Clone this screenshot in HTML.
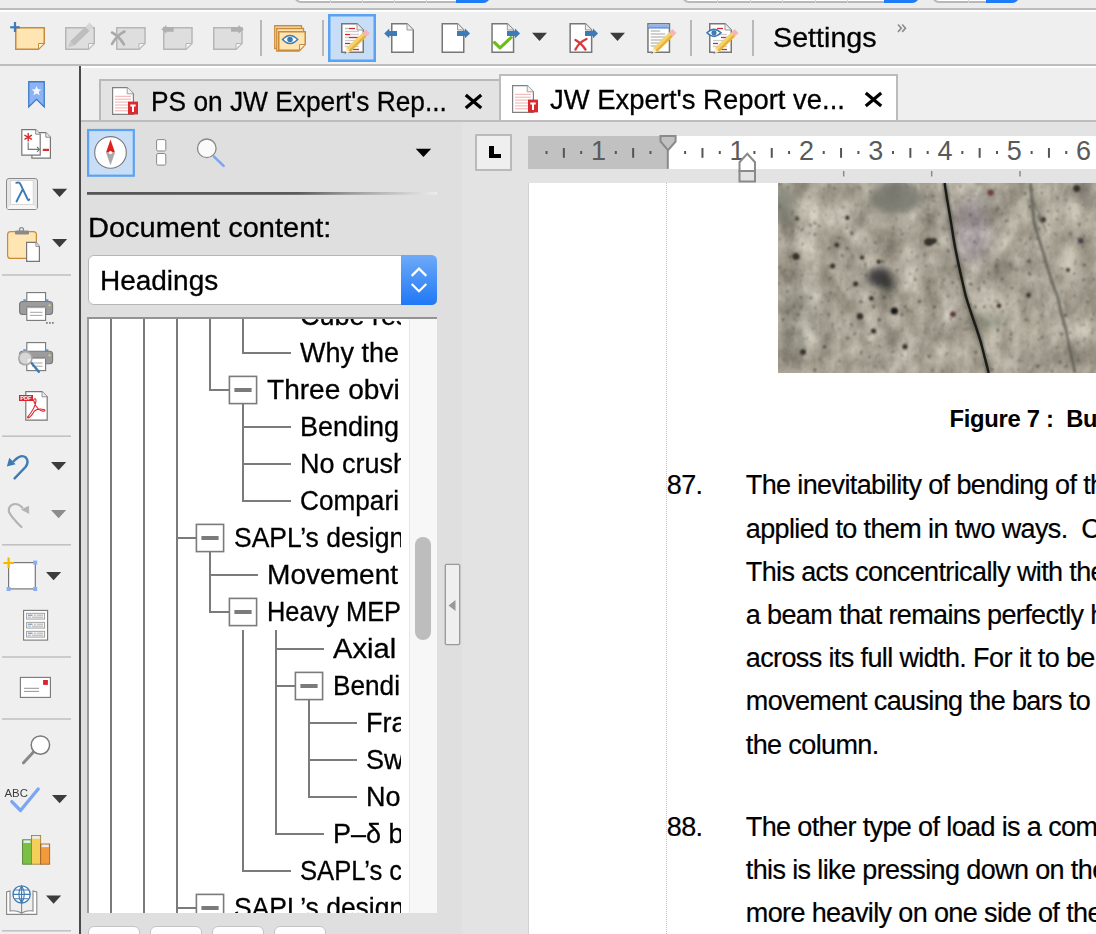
<!DOCTYPE html>
<html><head><meta charset="utf-8">
<style>
*{margin:0;padding:0;box-sizing:border-box}
html,body{width:1096px;height:934px;overflow:hidden;background:#ececec;font-family:"Liberation Sans",sans-serif;color:#000}
.a{position:absolute}
.t{position:absolute;white-space:pre;line-height:1}
svg{position:absolute;overflow:visible}
</style></head><body>

<!-- top strip -->
<div class="a" style="left:0;top:0;width:1096px;height:8px;background:#ececec"></div>
<div class="a" style="left:294px;top:-20px;width:196px;height:23px;border:2px solid #b8b8b8;border-radius:7px;background:#fff"></div>
<div class="a" style="left:456px;top:-20px;width:34px;height:23px;background:#1f7cf8;border-radius:0 7px 7px 0"></div>
<div class="a" style="left:682px;top:-20px;width:237px;height:23px;border:2px solid #b8b8b8;border-radius:7px;background:#fff"></div>
<div class="a" style="left:884px;top:-20px;width:35px;height:23px;background:#1f7cf8;border-radius:0 7px 7px 0"></div>
<div class="a" style="left:932px;top:-20px;width:87px;height:23px;border:2px solid #b8b8b8;border-radius:7px;background:#fff"></div>
<div class="a" style="left:986px;top:-20px;width:33px;height:23px;background:#1f7cf8;border-radius:0 7px 7px 0"></div>
<div class="a" style="left:330px;top:0;width:1px;height:3px;background:#d4d4d4"></div><div class="a" style="left:362px;top:0;width:1px;height:3px;background:#d4d4d4"></div><div class="a" style="left:394px;top:0;width:1px;height:3px;background:#d4d4d4"></div><div class="a" style="left:426px;top:0;width:1px;height:3px;background:#d4d4d4"></div><div class="a" style="left:717px;top:0;width:1px;height:3px;background:#d4d4d4"></div><div class="a" style="left:750px;top:0;width:1px;height:3px;background:#d4d4d4"></div><div class="a" style="left:782px;top:0;width:1px;height:3px;background:#d4d4d4"></div><div class="a" style="left:815px;top:0;width:1px;height:3px;background:#d4d4d4"></div><div class="a" style="left:847px;top:0;width:1px;height:3px;background:#d4d4d4"></div><div class="a" style="left:968px;top:0;width:1px;height:3px;background:#d4d4d4"></div>
<div class="a" style="left:0;top:8px;width:1096px;height:2px;background:#bcbcbc"></div>
<div class="a" style="left:0;top:10px;width:1096px;height:2px;background:#fdfdfd"></div>

<!-- toolbar -->
<div id="toolbar" class="a" style="left:0;top:12px;width:1096px;height:52px;background:#efefef"></div>
<div class="a" style="left:0;top:64px;width:1096px;height:2px;background:#bdbdbd"></div>

<!-- left sidebar -->
<div id="sidebar" class="a" style="left:0;top:66px;width:79px;height:868px;background:#efefef"></div>
<div class="a" style="left:79px;top:66px;width:2px;height:868px;background:#4a4a4a"></div>

<!-- tab bar -->
<div class="a" style="left:81px;top:66px;width:1015px;height:55px;background:#efefef"></div>
<div class="a" style="left:81px;top:66px;width:1015px;height:2px;background:#fdfdfd"></div>

<!-- panel -->
<div id="panel" class="a" style="left:81px;top:121px;width:381px;height:813px;background:#dfdfdf"></div>
<!-- doc area -->
<div id="docarea" class="a" style="left:462px;top:121px;width:634px;height:813px;background:#e3e3e3"></div>
<div class="a" style="left:81px;top:120px;width:1015px;height:2px;background:#bdbdbd"></div>

<!-- page -->
<div id="page" class="a" style="left:528px;top:183px;width:568px;height:751px;background:#fff;border-left:1px solid #d2d2d2"></div>

<!--IMG-->
<svg class="a" style="left:778px;top:183px;overflow:hidden" width="318" height="190" viewBox="778 183 318 190">
<defs>
<filter id="tex" x="0" y="0" width="100%" height="100%" color-interpolation-filters="sRGB">
 <feTurbulence type="fractalNoise" baseFrequency="0.05 0.035" numOctaves="4" seed="11" result="n"/>
 <feColorMatrix in="n" type="matrix" values="0.5 0.5 0 0 0  0.5 0.5 0 0 0  0.5 0.5 0 0 0  0 0 0 0 1" result="g"/>
 <feComposite in="SourceGraphic" in2="g" operator="arithmetic" k1="0" k2="1" k3="0.6" k4="-0.3" result="base"/>
 <feTurbulence type="fractalNoise" baseFrequency="0.22" numOctaves="2" seed="3" result="n2"/>
 <feColorMatrix in="n2" type="matrix" values="0 0 0 0 0.2  0 0 0 0 0.2  0 0 0 0 0.18  -10 0 0 0 3.1" result="sp"/>
 <feGaussianBlur in="sp" stdDeviation="0.8" result="sp1"/><feComponentTransfer in="sp1" result="sp2"><feFuncA type="linear" slope="0.7"/></feComponentTransfer>
 <feComposite in="sp2" in2="base" operator="over" result="o"/><feGaussianBlur in="o" stdDeviation="0.5"/>
</filter>
<filter id="bl05"><feGaussianBlur stdDeviation="0.5"/></filter><filter id="bl1"><feGaussianBlur stdDeviation="1.3"/></filter>
<filter id="bl3"><feGaussianBlur stdDeviation="3.5"/></filter>
<filter id="bl6"><feGaussianBlur stdDeviation="7"/></filter>
</defs>
<g filter="url(#tex)">
<rect x="778" y="183" width="318" height="190" fill="#a7a294"/>
<g filter="url(#bl6)" opacity="0.6">
 <ellipse cx="820" cy="230" rx="25" ry="30" fill="#bab4a5"/>
 <ellipse cx="1010" cy="330" rx="30" ry="35" fill="#b9b3a3"/>
 <ellipse cx="795" cy="320" rx="14" ry="40" fill="#8e8b80"/>
 <ellipse cx="972" cy="230" rx="18" ry="35" fill="#9f94a0"/>
 <ellipse cx="1065" cy="240" rx="25" ry="40" fill="#b4af9f"/>
 <ellipse cx="860" cy="360" rx="35" ry="12" fill="#bcb6a8"/>
 <ellipse cx="920" cy="300" rx="20" ry="25" fill="#b7b2a3"/>
 <ellipse cx="1040" cy="360" rx="30" ry="10" fill="#a09c90"/>
</g>
</g>
<g filter="url(#bl3)">
 <ellipse cx="895.5" cy="198" rx="26" ry="17" fill="#77776f" opacity="0.85"/>
 <ellipse cx="784" cy="205" rx="9" ry="20" fill="#7a7e72" opacity="0.7"/>
 <ellipse cx="879" cy="277" rx="12" ry="10" fill="#343234" opacity="0.9"/>
 <ellipse cx="888" cy="285" rx="7" ry="7" fill="#2a2828" opacity="0.7"/>
 <ellipse cx="988" cy="322" rx="15" ry="6" fill="#78806e" opacity="0.6"/>
 <ellipse cx="1082" cy="195" rx="10" ry="8" fill="#7a7470" opacity="0.5"/>
</g>
<g filter="url(#bl1)" fill="#35332c">
 <circle cx="796" cy="256.5" r="3.6"/><ellipse cx="929" cy="242" rx="5" ry="4"/><circle cx="894.4" cy="311" r="3.6" fill="#181818"/>
 <circle cx="860" cy="316.3" r="3.2"/><circle cx="832.6" cy="266" r="2.6"/><circle cx="855.7" cy="283.8" r="2.6"/>
 <circle cx="871.4" cy="298.4" r="2.3"/><circle cx="836.8" cy="245" r="2.3"/><circle cx="862" cy="257.6" r="2.2"/>
 <circle cx="803" cy="352" r="3"/><circle cx="905" cy="346.7" r="2.6"/><circle cx="873.5" cy="331" r="2.6"/>
 <circle cx="878.7" cy="261.8" r="2.2"/><circle cx="847.3" cy="217.7" r="2.2"/><circle cx="797" cy="218.8" r="1.8"/>
 <circle cx="934" cy="240.8" r="2.8"/><circle cx="953" cy="314.2" r="2.8" fill="#5a3838"/><circle cx="999" cy="305.8" r="2.3"/>
 <circle cx="1028.4" cy="295.3" r="2.2"/><circle cx="1080.8" cy="240.8" r="2.8" fill="#4a3c48"/><circle cx="1068" cy="270" r="1.9"/>
 <circle cx="1043" cy="219.8" r="2.8"/><circle cx="990.7" cy="192.6" r="3.2" fill="#6a4040"/><circle cx="1076.7" cy="188.4" r="3.5"/>
</g>
<path d="M1030.5,183 L1032,200 L1034,222 L1038,236 L1043,252 L1046.3,263.9 L1052,282 L1057.8,297.4 L1061,312 L1066.2,331 L1070,350 L1075,373" fill="none" stroke="#5a5850" stroke-width="2.4" opacity="0.85" filter="url(#bl1)"/><path d="M1032,200 L1040,215 L1046,232" fill="none" stroke="#6a6860" stroke-width="1.6" opacity="0.7" filter="url(#bl1)"/>
<path d="M944.6,183 C947,200 950,215 953,235 S961,275 964.5,291 S978,330 982.3,347.7 S987,365 988.6,373" fill="none" stroke="#50504a" stroke-width="5" opacity="0.6" filter="url(#bl1)"/>
<path d="M944.6,183 C947,200 950,215 953,235 S961,275 964.5,291 S978,330 982.3,347.7 S987,365 988.6,373" fill="none" stroke="#1a1a14" stroke-width="2.4" filter="url(#bl05)"/>
</svg>

<!--/IMG-->
<!--DOC-->
<div class="a" style="left:475px;top:134px;width:37px;height:37px;background:#efefef;border:2px solid #bababa"></div>
<div class="a" style="left:489px;top:146px;width:4.5px;height:12.3px;background:#000"></div>
<div class="a" style="left:489px;top:153.7px;width:12px;height:4.6px;background:#000"></div>
<div class="a" style="left:528px;top:135.5px;width:140px;height:33.3px;background:#c1c1c1"></div>
<div class="a" style="left:668px;top:135.5px;width:428px;height:33.3px;background:#fff"></div>
<div class="t" style="left:591.00px;top:137.84px;font-size:27px;width:15px;text-align:center;color:#5a5a5a">1</div>
<div class="t" style="left:729.60px;top:137.84px;font-size:27px;width:15px;text-align:center;color:#5a5a5a">1</div>
<div class="t" style="left:798.90px;top:137.84px;font-size:27px;width:15px;text-align:center;color:#5a5a5a">2</div>
<div class="t" style="left:868.20px;top:137.84px;font-size:27px;width:15px;text-align:center;color:#5a5a5a">3</div>
<div class="t" style="left:937.50px;top:137.84px;font-size:27px;width:15px;text-align:center;color:#5a5a5a">4</div>
<div class="t" style="left:1006.80px;top:137.84px;font-size:27px;width:15px;text-align:center;color:#5a5a5a">5</div>
<div class="t" style="left:1076.10px;top:137.84px;font-size:27px;width:15px;text-align:center;color:#5a5a5a">6</div>
<div class="t" style="left:666.8px;top:472.34px;font-size:27px;letter-spacing:-0.62px;font-weight:normal;color:#000;-webkit-text-stroke:0.2px #000">87.</div>
<div class="t" style="left:745.8px;top:472.34px;font-size:27px;letter-spacing:-0.62px;font-weight:normal;color:#000;-webkit-text-stroke:0.2px #000">The inevitability of bending of the columns</div>
<div class="t" style="left:745.8px;top:515.54px;font-size:27px;letter-spacing:-0.62px;font-weight:normal;color:#000;-webkit-text-stroke:0.2px #000">applied to them in two ways.  Concentric</div>
<div class="t" style="left:745.8px;top:558.74px;font-size:27px;letter-spacing:-0.62px;font-weight:normal;color:#000;-webkit-text-stroke:0.2px #000">This acts concentrically with the column</div>
<div class="t" style="left:745.8px;top:601.94px;font-size:27px;letter-spacing:-0.62px;font-weight:normal;color:#000;-webkit-text-stroke:0.2px #000">a beam that remains perfectly horizontal</div>
<div class="t" style="left:745.8px;top:645.14px;font-size:27px;letter-spacing:-0.62px;font-weight:normal;color:#000;-webkit-text-stroke:0.2px #000">across its full width. For it to bend</div>
<div class="t" style="left:745.8px;top:688.34px;font-size:27px;letter-spacing:-0.62px;font-weight:normal;color:#000;-webkit-text-stroke:0.2px #000">movement causing the bars to</div>
<div class="t" style="left:745.8px;top:731.54px;font-size:27px;letter-spacing:-0.62px;font-weight:normal;color:#000;-webkit-text-stroke:0.2px #000">the column.</div>
<div class="t" style="left:666.8px;top:813.74px;font-size:27px;letter-spacing:-0.62px;font-weight:normal;color:#000;-webkit-text-stroke:0.2px #000">88.</div>
<div class="t" style="left:745.8px;top:813.74px;font-size:27px;letter-spacing:-0.62px;font-weight:normal;color:#000;-webkit-text-stroke:0.2px #000">The other type of load is a combination</div>
<div class="t" style="left:745.8px;top:856.94px;font-size:27px;letter-spacing:-0.62px;font-weight:normal;color:#000;-webkit-text-stroke:0.2px #000">this is like pressing down on the top</div>
<div class="t" style="left:745.8px;top:900.14px;font-size:27px;letter-spacing:-0.62px;font-weight:normal;color:#000;-webkit-text-stroke:0.2px #000">more heavily on one side of the column</div>
<div class="t" style="left:949.5px;top:406.6px;font-size:23.8px;letter-spacing:-0.3px;font-weight:bold;color:#000">Figure 7 :  Buckling</div>
<svg class="a" style="left:0;top:0" width="1096" height="934" viewBox="0 0 1096 934"><rect x="545.52" y="151" width="2" height="3" fill="#555"/><rect x="580.17" y="151" width="2" height="3" fill="#555"/><rect x="562.85" y="148" width="2" height="9.8" fill="#555"/><rect x="614.83" y="151" width="2" height="3" fill="#555"/><rect x="649.48" y="151" width="2" height="3" fill="#555"/><rect x="632.15" y="148" width="2" height="9.8" fill="#555"/><rect x="684.12" y="151" width="2" height="3" fill="#555"/><rect x="718.77" y="151" width="2" height="3" fill="#555"/><rect x="701.45" y="148" width="2" height="9.8" fill="#555"/><rect x="753.42" y="151" width="2" height="3" fill="#555"/><rect x="788.07" y="151" width="2" height="3" fill="#555"/><rect x="770.75" y="148" width="2" height="9.8" fill="#555"/><rect x="822.73" y="151" width="2" height="3" fill="#555"/><rect x="857.38" y="151" width="2" height="3" fill="#555"/><rect x="840.05" y="148" width="2" height="9.8" fill="#555"/><rect x="892.02" y="151" width="2" height="3" fill="#555"/><rect x="926.67" y="151" width="2" height="3" fill="#555"/><rect x="909.35" y="148" width="2" height="9.8" fill="#555"/><rect x="961.33" y="151" width="2" height="3" fill="#555"/><rect x="995.98" y="151" width="2" height="3" fill="#555"/><rect x="978.65" y="148" width="2" height="9.8" fill="#555"/><rect x="1030.62" y="151" width="2" height="3" fill="#555"/><rect x="1065.27" y="151" width="2" height="3" fill="#555"/><rect x="1047.95" y="148" width="2" height="9.8" fill="#555"/><rect x="842.95" y="171" width="1.5" height="5.5" fill="#8a8a8a"/><rect x="930.95" y="171" width="1.5" height="5.5" fill="#8a8a8a"/><rect x="1019.25" y="171" width="1.5" height="5.5" fill="#8a8a8a"/><rect x="666.8" y="150" width="2" height="18.8" fill="#8a8a8a"/><path d="M660.5,135.9 H675.6 V141.5 L668,150.2 L660.5,141.5 Z" fill="#c1c1c1" stroke="#8a8a8a" stroke-width="2"/><path d="M739.5,181.4 V170.9 H755 V181.4 Z" fill="#e3e3e3" stroke="#8a8a8a" stroke-width="2"/><path d="M739.5,170.9 V162.2 L747.3,153.8 L755,162.2 V170.9 Z" fill="#fff" stroke="#8a8a8a" stroke-width="2"/><path d="M666.5,183 V934" stroke="#c4c4c4" stroke-width="1" stroke-dasharray="1,1"/></svg>
<!--/DOC-->
<!--PANEL-->
<div class="a" style="left:99px;top:79px;width:401px;height:43px;background:#e3e3e3;border-left:2px solid #b9b9b9;border-top:2px solid #b9b9b9"></div>
<div class="a" style="left:499px;top:74px;width:399px;height:47px;background:#fff;border:2px solid #bcbcbc;border-bottom:none"></div>
<div class="a" style="left:81px;top:120px;width:1015px;height:2px;background:#bdbdbd"></div>
<svg class="a" style="left:112px;top:87px" width="28" height="30" viewBox="0 0 28 30">
<path d="M0.6,0.6 H15.2 L21.4,6.8 V27.4 H0.6 Z" fill="#fff" stroke="#808080" stroke-width="1.2"/>
<path d="M15.2,0.6 V6.8 H21.4" fill="#f2f2f2" stroke="#9a9a9a" stroke-width="0.9"/>
<g stroke="#f2a5a5" stroke-width="0.9"><path d="M3,9.3 H19"/><path d="M3,12.2 H19"/><path d="M3,15.1 H19"/><path d="M3,18 H16"/><path d="M3,20.9 H16"/><path d="M3,23.8 H16"/></g>
<rect x="16" y="14.6" width="10" height="12.8" fill="#da2a2f"/>
<path d="M18.3,17.6 H23.7 V19.6 H22 V25 H20 V19.6 H18.3 Z" fill="#fff"/>
</svg>
<svg class="a" style="left:512px;top:85px" width="28" height="30" viewBox="0 0 28 30">
<path d="M0.6,0.6 H15.2 L21.4,6.8 V27.4 H0.6 Z" fill="#fff" stroke="#808080" stroke-width="1.2"/>
<path d="M15.2,0.6 V6.8 H21.4" fill="#f2f2f2" stroke="#9a9a9a" stroke-width="0.9"/>
<g stroke="#f2a5a5" stroke-width="0.9"><path d="M3,9.3 H19"/><path d="M3,12.2 H19"/><path d="M3,15.1 H19"/><path d="M3,18 H16"/><path d="M3,20.9 H16"/><path d="M3,23.8 H16"/></g>
<rect x="16" y="14.6" width="10" height="12.8" fill="#da2a2f"/>
<path d="M18.3,17.6 H23.7 V19.6 H22 V25 H20 V19.6 H18.3 Z" fill="#fff"/>
</svg>
<div class="t" style="left:151.4px;top:89px;font-size:27px;font-weight:normal;color:#000;transform:scaleX(0.974);transform-origin:0 0;;-webkit-text-stroke:0.3px #000">PS on JW Expert's Rep...</div>
<div class="t" style="left:550px;top:87px;font-size:27px;font-weight:normal;color:#000;transform:scaleX(1.016);transform-origin:0 0;;-webkit-text-stroke:0.3px #000">JW Expert's Report ve...</div>
<svg class="a" style="left:465px;top:93.5px" width="17" height="15" viewBox="0 0 17 15"><path d="M2,2 L15,13 M15,2 L2,13" stroke="#000" stroke-width="3.2" stroke-linecap="square"/></svg>
<svg class="a" style="left:864.5px;top:92px" width="17" height="15" viewBox="0 0 17 15"><path d="M2,2 L15,13 M15,2 L2,13" stroke="#000" stroke-width="3.2" stroke-linecap="square"/></svg>
<svg class="a" style="left:0;top:0" width="1096" height="934" viewBox="0 0 1096 934">
<rect x="88.1" y="130" width="45.7" height="45.7" fill="#c8def6" stroke="#5aa2f3" stroke-width="2.2"/>
<circle cx="110.5" cy="152.4" r="15.8" fill="#fff" stroke="#7a7a7a" stroke-width="1.1"/>
<path d="M110.5,139.4 L115,152.4 H106 Z" fill="#e02020"/>
<path d="M110.5,165.2 L115,152.4 H106 Z" fill="#a8a8a8"/>
<circle cx="110.5" cy="152.6" r="1.7" fill="#fff"/>
<rect x="156.6" y="139.6" width="9.2" height="11.4" rx="1.5" fill="#fff" stroke="#888" stroke-width="1"/>
<rect x="156.6" y="153.5" width="9.2" height="11.6" rx="1.5" fill="#fff" stroke="#888" stroke-width="1"/>
<path d="M214,156.6 L223.6,165.9" stroke="#7ba6f1" stroke-width="2.6" stroke-linecap="round"/>
<circle cx="206.8" cy="148.3" r="9.3" fill="#fafafa" stroke="#888" stroke-width="1.3"/>
<path d="M415.7,148.7 H431.2 L423.45,157.1 Z" fill="#000"/>
<defs><linearGradient id="gl" x1="0" x2="1"><stop offset="0" stop-color="#565656"/><stop offset="0.6" stop-color="#5a5a5a"/><stop offset="0.75" stop-color="#9a9a9a"/><stop offset="1" stop-color="#ececec"/></linearGradient>
<linearGradient id="cb" x1="0" x2="0" y1="0" y2="1"><stop offset="0" stop-color="#6eaaf8"/><stop offset="1" stop-color="#1f78f6"/></linearGradient></defs>
<rect x="87" y="192" width="350" height="2.8" fill="url(#gl)"/>
</svg>
<div class="t" style="left:88.2px;top:215.1px;font-size:27px;font-weight:normal;color:#000;transform:scaleX(1.074);transform-origin:0 0;;-webkit-text-stroke:0.3px #000">Document content:</div>
<div class="a" style="left:88px;top:255px;width:349px;height:50px;background:#fff;border:1.3px solid #b6b6b6;border-radius:6px"></div>
<svg class="a" style="left:401px;top:255px" width="36" height="50" viewBox="0 0 36 50">
<path d="M0,0 H30 Q36,0 36,6 V44 Q36,50 30,50 H0 Z" fill="url(#cb)"/>
<path d="M10.7,20.9 L18,13.6 L25.3,20.9 M10.7,29 L18,36.2 L25.3,29" fill="none" stroke="#fff" stroke-width="2.2"/>
</svg>
<div class="t" style="left:100px;top:268.1px;font-size:27px;font-weight:normal;color:#000;transform:scaleX(1.036);transform-origin:0 0;;-webkit-text-stroke:0.3px #000">Headings</div>
<div class="a" style="left:87px;top:317px;width:350px;height:596px;background:#fff;border-left:2px solid #9a9a9a;border-top:2px solid #939393"></div>
<div class="a" style="left:409px;top:319px;width:28px;height:594px;background:#f7f7f7;border-left:1px solid #e6e6e6"></div>
<div class="a" style="left:415px;top:537px;width:16px;height:103px;background:#bdbdbd;border-radius:8px"></div>
<svg class="a" style="left:0;top:0" width="1096" height="934" viewBox="0 0 1096 934"><defs><clipPath id="tc"><rect x="89" y="319" width="320" height="594"/></clipPath></defs><g clip-path="url(#tc)"><rect x="110" y="319" width="2" height="595" fill="#7b7b7b"/><rect x="143" y="319" width="2" height="595" fill="#7b7b7b"/><rect x="176" y="319" width="2" height="595" fill="#7b7b7b"/><rect x="209" y="319" width="2" height="72" fill="#7b7b7b"/><rect x="209" y="552" width="2" height="61" fill="#7b7b7b"/><rect x="242" y="319" width="2" height="35" fill="#7b7b7b"/><rect x="242" y="404" width="2" height="98" fill="#7b7b7b"/><rect x="242" y="630" width="2" height="242" fill="#7b7b7b"/><rect x="275" y="630" width="2" height="205" fill="#7b7b7b"/><rect x="308" y="700" width="2" height="98" fill="#7b7b7b"/><rect x="244" y="315" width="47" height="2" fill="#7b7b7b"/><rect x="244" y="352" width="47" height="2" fill="#7b7b7b"/><rect x="211" y="389" width="19" height="2" fill="#7b7b7b"/><rect x="229.4" y="376.4" width="27.2" height="27.2" fill="#fff" stroke="#7b7b7b" stroke-width="1.6"/><rect x="234.4" y="388" width="17.2" height="4" fill="#7b7b7b"/><rect x="244" y="426" width="47" height="2" fill="#7b7b7b"/><rect x="244" y="463" width="47" height="2" fill="#7b7b7b"/><rect x="244" y="500" width="47" height="2" fill="#7b7b7b"/><rect x="178" y="537" width="19" height="2" fill="#7b7b7b"/><rect x="196.4" y="524.4" width="27.2" height="27.2" fill="#fff" stroke="#7b7b7b" stroke-width="1.6"/><rect x="201.4" y="536" width="17.2" height="4" fill="#7b7b7b"/><rect x="211" y="574" width="47" height="2" fill="#7b7b7b"/><rect x="211" y="611" width="19" height="2" fill="#7b7b7b"/><rect x="229.4" y="598.4" width="27.2" height="27.2" fill="#fff" stroke="#7b7b7b" stroke-width="1.6"/><rect x="234.4" y="610" width="17.2" height="4" fill="#7b7b7b"/><rect x="277" y="648" width="47" height="2" fill="#7b7b7b"/><rect x="277" y="685" width="19" height="2" fill="#7b7b7b"/><rect x="295.4" y="672.4" width="27.2" height="27.2" fill="#fff" stroke="#7b7b7b" stroke-width="1.6"/><rect x="300.4" y="684" width="17.2" height="4" fill="#7b7b7b"/><rect x="310" y="722" width="47" height="2" fill="#7b7b7b"/><rect x="310" y="759" width="47" height="2" fill="#7b7b7b"/><rect x="310" y="796" width="47" height="2" fill="#7b7b7b"/><rect x="277" y="833" width="47" height="2" fill="#7b7b7b"/><rect x="244" y="870" width="47" height="2" fill="#7b7b7b"/><rect x="178" y="907" width="19" height="2" fill="#7b7b7b"/><rect x="196.4" y="894.4" width="27.2" height="27.2" fill="#fff" stroke="#7b7b7b" stroke-width="1.6"/><rect x="201.4" y="906" width="17.2" height="4" fill="#7b7b7b"/></g></svg>
<div class="a" style="left:89px;top:319px;width:312px;height:594px;overflow:hidden">
<div class="t" style="left:211.0px;top:-16.36px;font-size:27px;transform:scaleX(1.0);transform-origin:0 0;-webkit-text-stroke:0.3px #000">Cube results</div>
<div class="t" style="left:211.0px;top:20.64px;font-size:27px;transform:scaleX(1.0);transform-origin:0 0;-webkit-text-stroke:0.3px #000">Why the column</div>
<div class="t" style="left:178.0px;top:57.64px;font-size:27px;transform:scaleX(1.04);transform-origin:0 0;-webkit-text-stroke:0.3px #000">Three obvi</div>
<div class="t" style="left:211.0px;top:94.64px;font-size:27px;transform:scaleX(1.0);transform-origin:0 0;-webkit-text-stroke:0.3px #000">Bending</div>
<div class="t" style="left:211.0px;top:131.64px;font-size:27px;transform:scaleX(1.0);transform-origin:0 0;-webkit-text-stroke:0.3px #000">No crushing</div>
<div class="t" style="left:211.0px;top:168.64px;font-size:27px;transform:scaleX(0.97);transform-origin:0 0;-webkit-text-stroke:0.3px #000">Compari</div>
<div class="t" style="left:145.0px;top:205.64px;font-size:27px;transform:scaleX(0.98);transform-origin:0 0;-webkit-text-stroke:0.3px #000">SAPL’s design</div>
<div class="t" style="left:178.0px;top:242.64px;font-size:27px;transform:scaleX(1.04);transform-origin:0 0;-webkit-text-stroke:0.3px #000">Movement</div>
<div class="t" style="left:178.0px;top:279.64px;font-size:27px;transform:scaleX(0.94);transform-origin:0 0;-webkit-text-stroke:0.3px #000">Heavy MEP</div>
<div class="t" style="left:244.0px;top:316.64px;font-size:27px;transform:scaleX(1.08);transform-origin:0 0;-webkit-text-stroke:0.3px #000">Axial load</div>
<div class="t" style="left:244.0px;top:353.64px;font-size:27px;transform:scaleX(0.97);transform-origin:0 0;-webkit-text-stroke:0.3px #000">Bending</div>
<div class="t" style="left:277.0px;top:390.64px;font-size:27px;transform:scaleX(1.0);transform-origin:0 0;-webkit-text-stroke:0.3px #000">Frame</div>
<div class="t" style="left:277.0px;top:427.64px;font-size:27px;transform:scaleX(1.0);transform-origin:0 0;-webkit-text-stroke:0.3px #000">Sway</div>
<div class="t" style="left:277.0px;top:464.64px;font-size:27px;transform:scaleX(1.0);transform-origin:0 0;-webkit-text-stroke:0.3px #000">No sway</div>
<div class="t" style="left:244.0px;top:501.64px;font-size:27px;transform:scaleX(1.0);transform-origin:0 0;-webkit-text-stroke:0.3px #000">P–δ bending</div>
<div class="t" style="left:211.0px;top:538.64px;font-size:27px;transform:scaleX(0.95);transform-origin:0 0;-webkit-text-stroke:0.3px #000">SAPL’s calc</div>
<div class="t" style="left:145.0px;top:575.64px;font-size:27px;transform:scaleX(0.98);transform-origin:0 0;-webkit-text-stroke:0.3px #000">SAPL’s design</div>
</div>
<div class="a" style="left:88px;top:926px;width:52px;height:20px;background:#fdfdfd;border:1.2px solid #c4c4c4;border-radius:6px"></div>
<div class="a" style="left:150px;top:926px;width:52px;height:20px;background:#fdfdfd;border:1.2px solid #c4c4c4;border-radius:6px"></div>
<div class="a" style="left:212px;top:926px;width:52px;height:20px;background:#fdfdfd;border:1.2px solid #c4c4c4;border-radius:6px"></div>
<div class="a" style="left:274px;top:926px;width:52px;height:20px;background:#fdfdfd;border:1.2px solid #c4c4c4;border-radius:6px"></div>
<svg class="a" style="left:444px;top:563px" width="18" height="84" viewBox="0 0 18 84">
<path d="M2.3,1.3 H14.7 L15.7,2.3 V80.7 L14.7,81.7 H2.3 L1.3,80.7 V2.3 Z" fill="#efefef" stroke="#999" stroke-width="1.3"/>
<path d="M4.5,42.5 L11.5,37 V48 Z" fill="#999"/>
</svg>
<!--/PANEL-->
<!--TOPICONS-->
<svg class="a" style="left:0;top:0" width="1096" height="934" viewBox="0 0 1096 934">
<defs>
 <g id="pencil">
  <path d="M0,0 L5.5,-2.8 L5.5,2.8 Z" fill="#f7ead0"/>
  <path d="M0,0 L2,-1 L2,1 Z" fill="#555"/>
  <rect x="5.5" y="-2.8" width="22" height="5.6" fill="#f6d368"/>
  <rect x="5.5" y="0.4" width="22" height="2.4" fill="#e6b23a"/>
  <rect x="27.5" y="-2.8" width="5" height="5.6" fill="#f5b5b5"/>
 </g>
 <g id="docw">
  <path d="M0.75,0.75 H16 L22.25,7 V29.25 H0.75 Z" fill="#fff" stroke="#777" stroke-width="1.5"/>
  <path d="M16,0.75 V7 H22.25" fill="#eee" stroke="#999" stroke-width="1"/>
 </g>
 <path id="dd" d="M0,0 H15 L7.5,8.3 Z" fill="#3c3c3c"/>
</defs>

<!-- toolbar icons -->
<!-- new comment -->
<path d="M15.75,27.75 H44.25 V43.5 L38.5,49.25 H15.75 Z" fill="#fee5b2" stroke="#c98a3c" stroke-width="1.5"/>
<path d="M38.5,49.25 V43.5 H44.25 Z" fill="#fff5dc" stroke="#c98a3c" stroke-width="1"/>
<rect x="10.2" y="26.2" width="9.6" height="2.2" fill="#3e7bb6"/>
<rect x="13.9" y="22" width="2.2" height="10" fill="#3e7bb6"/>
<!-- edit comment gray -->
<path d="M65.75,27.75 H94.25 V43.5 L88.5,49.25 H65.75 Z" fill="#dedede" stroke="#b6b6b6" stroke-width="1.5"/>
<path d="M88.5,49.25 V43.5 H94.25 Z" fill="#f4f4f4" stroke="#b6b6b6" stroke-width="1"/>
<g transform="translate(68,47.6) rotate(-44)"><path d="M0,0 L6,-3 L6,3 Z" fill="#c8c8c8"/><rect x="6" y="-3" width="21" height="6" fill="#bdbdbd"/><rect x="27" y="-3" width="6" height="6" fill="#d6d6d6"/></g>
<!-- delete comment -->
<path d="M116.75,27.75 H145 V43.5 L139,49.25 H116.75 Z" fill="#dedede" stroke="#b6b6b6" stroke-width="1.5"/>
<path d="M139,49.25 V43.5 H145 Z" fill="#f4f4f4" stroke="#b6b6b6" stroke-width="1"/>
<path d="M112,44 Q117,35 124.5,31.5 M112,32.5 Q119,36 124,44.5" fill="none" stroke="#aaa" stroke-width="2.6" stroke-linecap="round"/>
<!-- prev comment -->
<path d="M163.75,27.75 H192 V43.5 L186,49.25 H163.75 Z" fill="#dedede" stroke="#b6b6b6" stroke-width="1.5"/>
<path d="M186,49.25 V43.5 H192 Z" fill="#f4f4f4" stroke="#b6b6b6" stroke-width="1"/>
<path d="M161.3,29.3 L166.4,24.9 V27 H173.7 V31.7 H166.4 V33.8 Z" fill="#b0b0b0"/>
<!-- next comment -->
<path d="M213.75,27.75 H242 V43.5 L236,49.25 H213.75 Z" fill="#dedede" stroke="#b6b6b6" stroke-width="1.5"/>
<path d="M236,49.25 V43.5 H242 Z" fill="#f4f4f4" stroke="#b6b6b6" stroke-width="1"/>
<path d="M243.8,29.3 L238.4,24.9 V27 H231 V31.7 H238.4 V33.8 Z" fill="#b0b0b0"/>
<!-- sep -->
<rect x="260" y="20" width="2" height="36" fill="#b8b8b8"/>
<!-- show comments -->
<path d="M274.75,25.75 H301.5 V44 L297,48.5 H274.75 Z" fill="#fee5b2" stroke="#c98a3c" stroke-width="1.3"/>
<path d="M276.75,28.5 H303.5 V46.5 L299,51 H276.75 Z" fill="#fee5b2" stroke="#c98a3c" stroke-width="1.3"/>
<path d="M278.75,31.75 H305.25 V44.5 L299.5,50.25 H278.75 Z" fill="#fee5b2" stroke="#c98a3c" stroke-width="1.5"/>
<path d="M299.5,50.25 V44.5 H305.25 Z" fill="#fff5dc" stroke="#c98a3c" stroke-width="1"/>
<path d="M282.6,39.5 Q290,31.5 297.6,39.5 Q290,47.5 282.6,39.5 Z" fill="#fff" stroke="#3e7bb6" stroke-width="1.6"/>
<circle cx="290" cy="39.5" r="2.8" fill="#3e7bb6"/>
<rect x="322" y="20" width="2" height="36" fill="#b8b8b8"/>
<!-- selected record -->
<rect x="329.25" y="15.25" width="45.5" height="45.5" fill="#c8def6" stroke="#5aa2f3" stroke-width="2.5"/>
<g transform="translate(341,23)">
 <path d="M0.75,0.75 H16 L22.25,7 V29.25 H0.75 Z" fill="#fff" stroke="#777" stroke-width="1.5"/>
 <path d="M16,0.75 V7 H22.25" fill="#eee" stroke="#999" stroke-width="1"/>
 <g stroke-width="1.3"><path d="M4,5.5 H8" stroke="#bbb"/><path d="M8,5.5 H14" stroke="#d42a2a"/>
 <path d="M4,8.5 H18" stroke="#ccc"/><path d="M4,11.5 H9" stroke="#d42a2a"/><path d="M9,11.5 H18" stroke="#ccc"/>
 <path d="M4,14.5 H8" stroke="#ccc"/><path d="M8,14.5 H18" stroke="#d42a2a"/><path d="M4,17.5 H18" stroke="#ccc"/>
 <path d="M4,20.5 H9" stroke="#d42a2a"/><path d="M9,20.5 H18" stroke="#ccc"/><path d="M4,23.5 H18" stroke="#ccc"/><path d="M12,26.5 H18" stroke="#d42a2a"/></g>
</g>
<use href="#pencil" transform="translate(344.5,53.7) rotate(-43.7)"/>
<!-- prev change -->
<use href="#docw" transform="translate(391,23)"/>
<path d="M384.2,33.4 L389.3,28.6 V31 H397 V35.9 H389.3 V38.2 Z" fill="#3e7bb6"/>
<!-- next change -->
<use href="#docw" transform="translate(441.5,23)"/>
<path d="M470.1,33.4 L465,28.6 V31 H457 V35.9 H465 V38.2 Z" fill="#3e7bb6"/>
<!-- accept -->
<use href="#docw" transform="translate(491.3,23)"/>
<path d="M520.1,33.4 L515,28.6 V31 H507 V35.9 H515 V38.2 Z" fill="#3e7bb6"/>
<path d="M494.5,42.5 L500,47.8 L511,37.6" fill="none" stroke="#6cbe1a" stroke-width="3.2" stroke-linecap="round" stroke-linejoin="round"/>
<use href="#dd" transform="translate(532,32.7)"/>
<!-- reject -->
<use href="#docw" transform="translate(569.4,23)"/>
<path d="M598.1,33.4 L593,28.6 V31 H585 V35.9 H593 V38.2 Z" fill="#3e7bb6"/>
<path d="M575.5,49.5 Q579,42 586.5,39 M575.5,40 Q581,43 585.5,49.5" fill="none" stroke="#d73a3a" stroke-width="2.4" stroke-linecap="round"/>
<use href="#dd" transform="translate(610,32.7)"/>
<!-- protect -->
<g transform="translate(647.2,23)">
 <rect x="0.75" y="0.75" width="21.5" height="28.5" fill="#fff" stroke="#777" stroke-width="1.5"/>
 <rect x="1.5" y="1.5" width="20" height="3.5" fill="#8db4f4"/>
 <path d="M0.75,5 H22.25" stroke="#4a7fc8" stroke-width="1"/>
 <g stroke="#aaa" stroke-width="1.1"><path d="M3.5,8 H13"/><path d="M3.5,11 H18"/><path d="M3.5,14 H18"/><path d="M3.5,17 H18"/><path d="M3.5,20 H14"/><path d="M3.5,23 H10"/></g>
</g>
<use href="#pencil" transform="translate(651.3,53.7) rotate(-44.4)"/>
<rect x="690" y="20" width="2" height="36" fill="#b8b8b8"/>
<!-- compare -->
<g transform="translate(709,23)">
 <path d="M0.75,0.75 H16 L22.25,7 V29.25 H0.75 Z" fill="#fff" stroke="#777" stroke-width="1.5"/>
 <path d="M16,0.75 V7 H22.25" fill="#eee" stroke="#999" stroke-width="1"/>
 <g stroke-width="1.3"><path d="M8,5.5 H14" stroke="#d42a2a"/><path d="M12,14.5 H18" stroke="#d42a2a"/><path d="M4,11.5 H18" stroke="#ccc"/><path d="M4,17.5 H18" stroke="#ccc"/><path d="M4,20.5 H9" stroke="#d42a2a"/><path d="M4,23.5 H18" stroke="#ccc"/><path d="M12,26.5 H18" stroke="#d42a2a"/></g>
</g>
<path d="M707,32.8 Q714,25.8 721,32.8 Q714,39.8 707,32.8 Z" fill="#fff" stroke="#3e7bb6" stroke-width="1.6"/>
<circle cx="714" cy="32.8" r="2.6" fill="#3e7bb6"/>
<use href="#pencil" transform="translate(713.4,53.7) rotate(-44.5)"/>
<rect x="752" y="20" width="2" height="36" fill="#b8b8b8"/>
<path d="M898,24.5 L901.3,28.2 L898,31.9 M902.2,24.5 L905.5,28.2 L902.2,31.9" fill="none" stroke="#8a8a8a" stroke-width="1.6"/>
</svg>
<div class="t" style="left:773.3px;top:24.7px;font-size:27px;transform:scaleX(1.062);transform-origin:0 0;-webkit-text-stroke:0.3px #000">Settings</div>

<!--/TOPICONS-->
<!--SIDEICONS-->
<svg class="a" style="left:0;top:0" width="1096" height="934" viewBox="0 0 1096 934">
<defs>
 <path id="dd2" d="M0,0 H15.2 L7.6,8.3 Z" fill="#3c3c3c"/>
</defs>
<!-- bookmark -->
<path d="M28.75,81.75 H44.25 V107 L36.5,99.3 L28.75,107 Z" fill="#8cb3f4" stroke="#3d7cc4" stroke-width="1.3"/>
<path d="M36.5,86 L37.9,89.3 L41.4,89.5 L38.7,91.8 L39.6,95.3 L36.5,93.4 L33.4,95.3 L34.3,91.8 L31.6,89.5 L35.1,89.3 Z" fill="#f2f6ff"/>
<!-- compare docs -->
<path d="M31.9,132.6 H45.8 L50.4,137.2 V158.1 H31.9 Z" fill="#fff" stroke="#777" stroke-width="1.2"/>
<path d="M45.8,132.6 V137.2 H50.4" fill="#eee" stroke="#888" stroke-width="1"/>
<path d="M21.8,129.6 H35.7 L40.2,134.2 V155.1 H21.8 Z" fill="#fff" stroke="#777" stroke-width="1.2"/>
<path d="M35.7,129.6 V134.2 H40.2" fill="#eee" stroke="#888" stroke-width="1"/>
<g stroke="#d62c2c" stroke-width="1.4" stroke-linecap="round"><path d="M28.2,133.4 V141"/><path d="M24.9,135.3 L31.5,139.1"/><path d="M24.9,139.1 L31.5,135.3"/></g>
<path d="M28.2,142.5 V149.4 H39.5 M37,147 L39.5,149.4 L37,151.8" fill="none" stroke="#777" stroke-width="1.1"/>
<rect x="42.8" y="148.8" width="6.2" height="2.2" fill="#d62c2c"/>
<!-- lambda button -->
<rect x="6.5" y="178.5" width="31" height="31" rx="2.5" fill="#e6e6e6" stroke="#8a8a8a" stroke-width="1"/>
<path d="M7,209 L10.8,204.5 H33.2 L37,209 Z" fill="#f6f6f6"/>
<rect x="10.7" y="180.5" width="22.5" height="24" fill="#fff" stroke="#cfcfcf" stroke-width="0.8"/>
<path d="M16.3,182.8 Q19.5,181.5 20.8,185 L27.5,199 Q28.5,201.5 29.3,199.5 M22.6,189.5 L16.5,201.5" fill="none" stroke="#3e7bb6" stroke-width="1.9" stroke-linecap="round"/>
<use href="#dd2" transform="translate(52,188.7)"/>
<!-- clipboard -->
<rect x="7.6" y="231.6" width="28.8" height="26.8" rx="3" fill="#fee5b2" stroke="#c98a3c" stroke-width="1.2"/>
<rect x="15" y="230.6" width="14" height="3.8" rx="1.2" fill="#8a8a8a"/>
<circle cx="21.5" cy="229.6" r="2" fill="none" stroke="#8a8a8a" stroke-width="1.2"/>
<path d="M26.6,242.3 H35.9 L39.4,246.4 V261.3 H26.6 Z" fill="#fff" stroke="#777" stroke-width="1.2"/>
<path d="M35.9,242.3 V246.4 H39.4" fill="#eee" stroke="#888" stroke-width="0.9"/>
<use href="#dd2" transform="translate(52,239)"/>
<rect x="2" y="274.2" width="69" height="1.6" fill="#c2c2c2"/>
<!-- printer -->
<rect x="26.8" y="292.6" width="18.8" height="10" fill="#fff" stroke="#777" stroke-width="1.1"/>
<rect x="23.3" y="299.2" width="2.6" height="2.6" fill="#5b9ee8"/><rect x="45.8" y="299.2" width="2.6" height="2.6" fill="#5b9ee8"/>
<rect x="19.6" y="301.5" width="33" height="13" rx="3" fill="#9c9c9c" stroke="#787878" stroke-width="1.1"/>
<path d="M49.5,304 L51,305.3 L49.5,306.6 L48,305.3 Z" fill="#c9e629"/>
<rect x="26.8" y="306.8" width="18.8" height="13.6" fill="#fff" stroke="#777" stroke-width="1.1"/>
<path d="M26.5,307.5 H46" stroke="#aaa" stroke-width="1.3"/>
<path d="M30,312.3 H42.5 M30,315.4 H42.5" stroke="#9a9a9a" stroke-width="0.9"/>
<g fill="#888"><rect x="46" y="322" width="1.8" height="1.8"/><rect x="49" y="322" width="1.8" height="1.8"/><rect x="52" y="322" width="1.8" height="1.8"/></g>
<!-- print preview -->
<rect x="26.8" y="342.6" width="18.8" height="10" fill="#fff" stroke="#777" stroke-width="1.1"/>
<rect x="23.3" y="349.2" width="2.6" height="2.6" fill="#5b9ee8"/><rect x="45.8" y="349.2" width="2.6" height="2.6" fill="#5b9ee8"/>
<rect x="19.6" y="351.3" width="33" height="12.5" rx="3" fill="#9c9c9c" stroke="#787878" stroke-width="1.1"/>
<path d="M49.5,354 L51,355.3 L49.5,356.6 L48,355.3 Z" fill="#c9e629"/>
<rect x="26.8" y="357.6" width="18.8" height="13" fill="#fff" stroke="#777" stroke-width="1.1"/>
<path d="M26.5,358.3 H46" stroke="#aaa" stroke-width="1.3"/>
<path d="M32,363 H42.5 M32,366.2 H42.5" stroke="#9a9a9a" stroke-width="0.9"/>
<path d="M31.5,363 L38.8,371.8" stroke="#3e7bb6" stroke-width="2.4" stroke-linecap="round"/>
<circle cx="25.4" cy="358.2" r="6.6" fill="rgba(235,235,235,0.75)" stroke="#a9a9a9" stroke-width="1.6"/>
<!-- pdf -->
<path d="M25.8,391.6 H42 L47.2,396.8 V420.2 H25.8 Z" fill="#fff" stroke="#777" stroke-width="1.2"/>
<path d="M42,391.6 V396.8 H47.2" fill="#eee" stroke="#888" stroke-width="0.9"/>
<rect x="19" y="395" width="14" height="6" fill="#d8262c"/>
<text x="20.2" y="400.3" font-family="Liberation Sans" font-weight="bold" font-size="5.6" fill="#fff">PDF</text>
<path d="M33.5,400 Q36,397 36,401 Q35,408 28.5,416 Q27,417.5 28,418 Q31,417 34.5,411 Q38,408 44,409.5 Q45.5,410 44.5,411 Q40,412 36,406 Q34,402 33.5,400 Z" fill="none" stroke="#d8262c" stroke-width="1.1"/>
<rect x="2" y="435.4" width="69" height="1.6" fill="#c2c2c2"/>
<!-- undo -->
<path d="M14.6,478.4 L25.5,467 Q29.5,461.5 25.8,457.5 Q21.5,454 15.5,459.5 L13.8,461.2" fill="none" stroke="#3e7bb6" stroke-width="2.4" stroke-linecap="round"/>
<path d="M6.8,466.4 L9.3,457.8 L15.6,464.3 Z" fill="#3e7bb6"/>
<use href="#dd2" transform="translate(51,462)"/>
<!-- redo -->
<path d="M21.4,527 Q12,518 9,512 Q8,506 13.5,504.3 Q18,503 22.3,507.5" fill="none" stroke="#b4b4b4" stroke-width="2.2" stroke-linecap="round"/>
<path d="M29.2,514 L29,505.8 L20.9,509.5 Z" fill="#b4b4b4"/>
<path d="M51,510 H66.2 L58.6,518.3 Z" fill="#8c8c8c"/>
<rect x="2" y="544" width="69" height="1.6" fill="#c2c2c2"/>
<!-- shape -->
<rect x="8.6" y="562.6" width="26.7" height="26.3" fill="#fff" stroke="#777" stroke-width="1.2"/>
<g fill="#86aef6"><rect x="33.2" y="560.6" width="4" height="4"/><rect x="6.6" y="587" width="4" height="4"/><rect x="33.2" y="587" width="4" height="4"/></g>
<path d="M8.6,557.6 V568.2 M3.4,563 H14" stroke="#f5b800" stroke-width="2.2"/>
<use href="#dd2" transform="translate(46,572)"/>
<!-- form -->
<rect x="23.6" y="610.4" width="24" height="29.7" fill="#fff" stroke="#777" stroke-width="1.1"/>
<g stroke="#999" stroke-width="0.9" fill="#f4f4f4"><rect x="26.6" y="613.3" width="18" height="5.8"/><rect x="26.6" y="622.3" width="18" height="5.8"/><rect x="26.6" y="631.3" width="18" height="5.8"/></g>
<g stroke-width="0.9"><path d="M28,615.2 H32.5 M28,624.2 H32.5 M28,633.2 H32.5" stroke="#3e7bb6"/><path d="M34,615.2 H36 M37,615.2 H43 M28,617.2 H31 M32,617.2 H43 M34,624.2 H36 M37,624.2 H43 M28,626.2 H31 M32,626.2 H43 M34,633.2 H36 M37,633.2 H43 M28,635.2 H31 M32,635.2 H43" stroke="#aaa"/></g>
<rect x="2" y="656.2" width="69" height="1.6" fill="#c2c2c2"/>
<!-- envelope -->
<rect x="20.4" y="677.4" width="30" height="20" fill="#fff" stroke="#777" stroke-width="1.1"/>
<rect x="43.1" y="680" width="4.8" height="4.9" fill="#d8262c"/>
<path d="M24,688.3 H39 M24,691.4 H39" stroke="#888" stroke-width="0.9"/>
<rect x="2" y="718.2" width="69" height="1.6" fill="#c2c2c2"/>
<!-- find -->
<path d="M33.5,752 L23.5,762.8" stroke="#888" stroke-width="3" stroke-linecap="round"/>
<circle cx="40.4" cy="745.1" r="9.2" fill="#fff" stroke="#7a7a7a" stroke-width="1.5"/>
<!-- spelling -->
<text x="4.5" y="796.8" font-family="Liberation Sans" font-size="11.4" fill="#3c3c3c">ABC</text>
<path d="M11.8,801.6 L20.5,810.5 L38.2,789" fill="none" stroke="#7ba6f1" stroke-width="3.3" stroke-linecap="round" stroke-linejoin="round"/>
<use href="#dd2" transform="translate(52,795)"/>
<!-- books -->
<rect x="22.6" y="839.8" width="8.8" height="24.4" fill="#7cc043" stroke="#4b7a2b" stroke-width="0.8"/>
<rect x="23.5" y="840.4" width="7" height="2.5" fill="#e5f0ff"/>
<rect x="31.4" y="835.6" width="9.3" height="28.6" fill="#f6cf5a" stroke="#9a7a30" stroke-width="0.8"/>
<rect x="32.3" y="836.2" width="7.5" height="2.5" fill="#e5f0ff"/>
<rect x="40.7" y="844" width="9" height="20.2" fill="#f39b3c" stroke="#9a5a20" stroke-width="0.8"/>
<rect x="41.6" y="844.6" width="7.2" height="2.5" fill="#e5f0ff"/>
<!-- globe book -->
<path d="M6.6,914.4 V892 L10,891 V911 Q16,910 21.6,913 Q27,910 33,911 V891 L36.8,892 V914.4 Z M21.6,913 V898" fill="#fff" stroke="#888" stroke-width="1.1"/>
<circle cx="21.6" cy="894.4" r="8.6" fill="#fff" stroke="#3e7bb6" stroke-width="1.3"/>
<path d="M21.6,885.8 V903 M13,894.4 H30.2 M14.3,890 H28.9 M14.3,898.8 H28.9 M21.6,885.8 Q16,894.4 21.6,903 M21.6,885.8 Q27.2,894.4 21.6,903" fill="none" stroke="#3e7bb6" stroke-width="1.1"/>
<use href="#dd2" transform="translate(46,895.5)"/>
<rect x="2" y="930" width="69" height="1.6" fill="#c2c2c2"/>
</svg>

<!--/SIDEICONS-->
</body></html>
